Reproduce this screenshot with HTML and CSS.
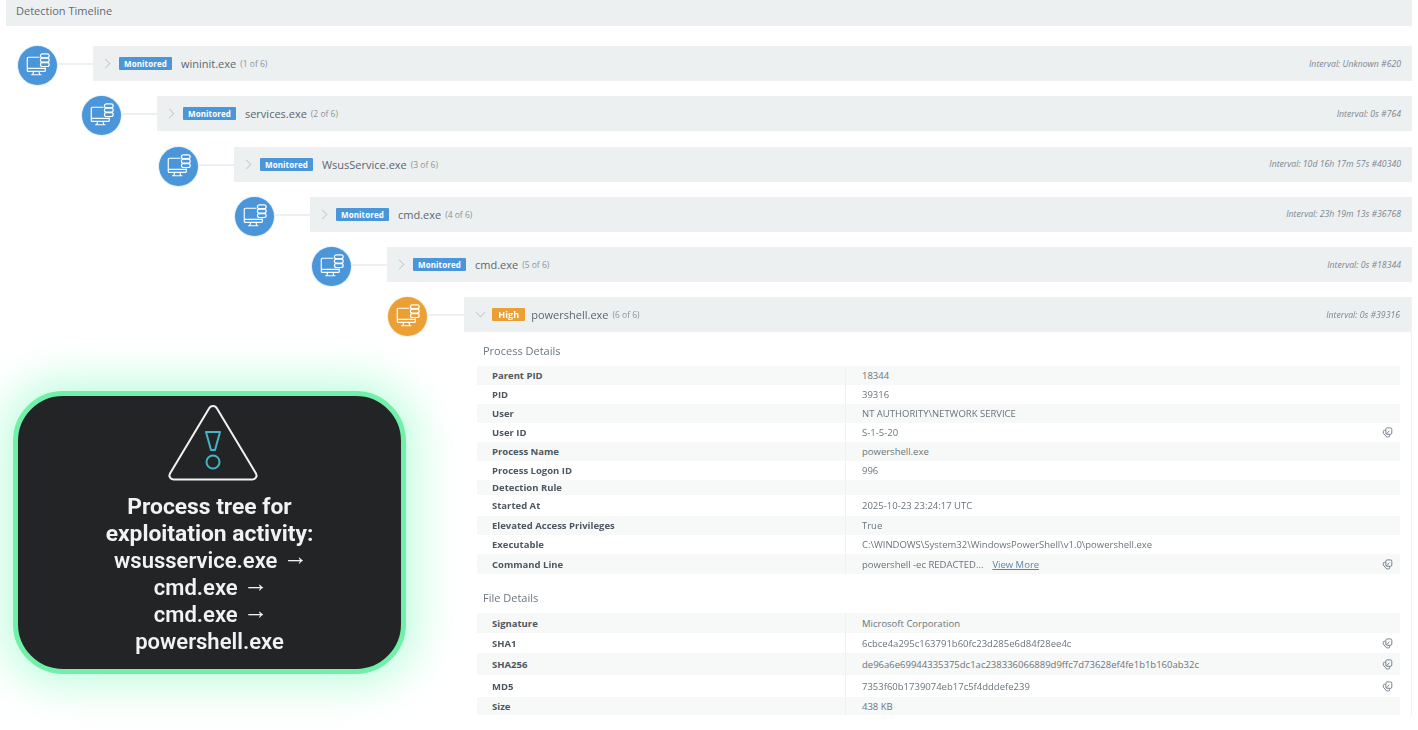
FILE: index.html
```html
<!DOCTYPE html>
<html lang="en">
<head>
    <meta charset="UTF-8">
    <meta name="viewport" content="width=device-width, initial-scale=1.0">
    <title>Detection Timeline</title>
    <link rel="stylesheet" href="styles.css">
</head>
<body>
    <svg class="defs" width="0" height="0">
        <symbol id="host" viewBox="0 0 40 40">
            <g fill="none" stroke="#fff" stroke-width="1.2">
                <path d="M22 11.500H10.500a1 1 0 0 0-1 1V25a1 1 0 0 0 1 1H27a1 1 0 0 0 1-1v-3"/>
                <path d="M9.500 23h18.500"/>
                <path d="M16 26l-.7 3.200M21.500 26l.7 3.200M13.500 29.500h10.500"/>
                <rect x="23" y="8" width="9" height="4" rx="2"/>
                <rect x="23" y="12.500" width="9" height="4" rx="2"/>
                <rect x="23" y="17" width="9" height="4" rx="2"/>
            </g>
        </symbol>
        <symbol id="copy" viewBox="0 0 12 12">
            <g fill="none" stroke="#6d7a86" stroke-width="1">
                <rect x="4.200" y="1" width="6.500" height="7" rx="1.400"/>
                <path d="M4 3.600H2.600a1.200 1.200 0 0 0-1.200 1.200v1.800L5 10.800h2.200a1.200 1.200 0 0 0 1.200-1.200V8"/>
                <path d="M5 7.500L8 4"/>
            </g>
        </symbol>
    </svg>

    <div class="page">
        <div class="title-bar">Detection Timeline</div>

        <div class="timeline">
            <div class="node level-1">
                <svg class="node-icon"><use href="#host"/></svg>
                <div class="link"></div>
                <div class="bar">
                    <span class="chevron"></span>
                    <span class="badge">Monitored</span>
                    <span class="proc">wininit.exe</span>
                    <span class="count">(1 of 6)</span>
                    <span class="interval">Interval: Unknown #620</span>
                </div>
            </div>
            <div class="node level-2">
                <svg class="node-icon"><use href="#host"/></svg>
                <div class="link"></div>
                <div class="bar">
                    <span class="chevron"></span>
                    <span class="badge">Monitored</span>
                    <span class="proc">services.exe</span>
                    <span class="count">(2 of 6)</span>
                    <span class="interval">Interval: 0s #764</span>
                </div>
            </div>
            <div class="node level-3">
                <svg class="node-icon"><use href="#host"/></svg>
                <div class="link"></div>
                <div class="bar">
                    <span class="chevron"></span>
                    <span class="badge">Monitored</span>
                    <span class="proc">WsusService.exe</span>
                    <span class="count">(3 of 6)</span>
                    <span class="interval">Interval: 10d 16h 17m 57s #40340</span>
                </div>
            </div>
            <div class="node level-4">
                <svg class="node-icon"><use href="#host"/></svg>
                <div class="link"></div>
                <div class="bar">
                    <span class="chevron"></span>
                    <span class="badge">Monitored</span>
                    <span class="proc">cmd.exe</span>
                    <span class="count">(4 of 6)</span>
                    <span class="interval">Interval: 23h 19m 13s #36768</span>
                </div>
            </div>
            <div class="node level-5">
                <svg class="node-icon"><use href="#host"/></svg>
                <div class="link"></div>
                <div class="bar">
                    <span class="chevron"></span>
                    <span class="badge">Monitored</span>
                    <span class="proc">cmd.exe</span>
                    <span class="count">(5 of 6)</span>
                    <span class="interval">Interval: 0s #18344</span>
                </div>
            </div>
            <div class="node level-6 high">
                <svg class="node-icon"><use href="#host"/></svg>
                <div class="link"></div>
                <div class="expanded">
                    <div class="bar">
                        <span class="chevron open"></span>
                        <span class="badge">High</span>
                        <span class="proc">powershell.exe</span>
                        <span class="count">(6 of 6)</span>
                        <span class="interval">Interval: 0s #39316</span>
                    </div>
                    <div class="details">
                        <h4>Process Details</h4>
                        <div class="table">
                            <div class="row"><b>Parent PID</b><span>18344</span></div>
                            <div class="row"><b>PID</b><span>39316</span></div>
                            <div class="row"><b>User</b><span>NT AUTHORITY\NETWORK SERVICE</span></div>
                            <div class="row"><b>User ID</b><span>S-1-5-20</span><svg class="copy"><use href="#copy"/></svg></div>
                            <div class="row"><b>Process Name</b><span>powershell.exe</span></div>
                            <div class="row"><b>Process Logon ID</b><span>996</span></div>
                            <div class="row short"><b>Detection Rule</b><span></span></div>
                            <div class="row tall"><b>Started At</b><span>2025-10-23 23:24:17 UTC</span></div>
                            <div class="row"><b>Elevated Access Privileges</b><span>True</span></div>
                            <div class="row"><b>Executable</b><span>C:\WINDOWS\System32\WindowsPowerShell\v1.0\powershell.exe</span></div>
                            <div class="row mid"><b>Command Line</b><span>powershell -ec REDACTED...<a class="more">View More</a></span><svg class="copy"><use href="#copy"/></svg></div>
                        </div>
                        <h4 class="file-head">File Details</h4>
                        <div class="table">
                            <div class="row mid"><b>Signature</b><span>Microsoft Corporation</span></div>
                            <div class="row mid"><b>SHA1</b><span>6cbce4a295c163791b60fc23d285e6d84f28ee4c</span><svg class="copy"><use href="#copy"/></svg></div>
                            <div class="row big"><b>SHA256</b><span>de96a6e69944335375dc1ac238336066889d9ffc7d73628ef4fe1b1b160ab32c</span><svg class="copy"><use href="#copy"/></svg></div>
                            <div class="row big"><b>MD5</b><span>7353f60b1739074eb17c5f4dddefe239</span><svg class="copy"><use href="#copy"/></svg></div>
                            <div class="row last"><b>Size</b><span>438 KB</span></div>
                        </div>
                    </div>
                </div>
            </div>
        </div>
    </div>

    <div class="callout">
        <svg class="warn" width="94" height="78" viewBox="0 0 94 78">
            <path d="M43 4.500a4.500 4.500 0 0 1 8 0l39 65a4 4 0 0 1-3.500 6H7.500a4 4 0 0 1-3.500-6z" fill="none" stroke="#f1f1f1" stroke-width="2"/>
            <path d="M40 28h14l-5 18h-4z" fill="none" stroke="#45b4c6" stroke-width="2" stroke-linejoin="round"/>
            <circle cx="47" cy="58" r="6.500" fill="none" stroke="#45b4c6" stroke-width="2"/>
        </svg>
        <p><span class="lead">Process tree for<br>exploitation activity:</span><br>wsusservice.exe <span class="arrow">→</span><br>cmd.exe <span class="arrow">→</span><br>cmd.exe <span class="arrow">→</span><br>powershell.exe</p>
    </div>
</body>
</html>
```

FILE: styles.css
```css
body {
    margin: 0;
    height: 730px;
    overflow: hidden;
    position: relative;
    background-color: white;
    font-family: "Open Sans", Arial, sans-serif;
    color: #5f6b75;
}

.defs {
    position: absolute;
}

.page {
    padding: 0 6px;
    filter: blur(0.7px);
}

.title-bar {
    height: 26px;
    padding: 4px 10px 0;
    box-sizing: border-box;
    background-color: #edf0f1;
    font-size: 11px;
    line-height: 14px;
    color: #5e6a74;
}

.timeline {
    margin-top: 20px;
    display: flex;
    flex-direction: column;
    gap: 15.3px;
}

.node {
    display: flex;
    align-items: flex-start;
}

.level-1 { margin-left: 12px; }
.level-2 { margin-left: 76px; }
.level-3 { margin-left: 153px; }
.level-4 { margin-left: 229px; }
.level-5 { margin-left: 306px; }
.level-6 { margin-left: 382px; }

.node-icon {
    flex: none;
    width: 39px;
    height: 39px;
    margin-bottom: -4px;
    border-radius: 50%;
    background-color: #4a96d9;
    box-shadow: 0 0 0 1px #e6f0f8;
}

.high .node-icon {
    background-color: #eaa035;
    box-shadow: 0 0 0 1px #faf0e0;
}

.link {
    flex: none;
    width: 36px;
    height: 2px;
    margin-top: 17px;
    background-color: #edf0f1;
}

.level-6 .link {
    width: 37px;
}

.bar {
    flex: 1;
    height: 35px;
    display: flex;
    align-items: center;
    padding: 0 11px 0 9px;
    background-color: #edf0f1;
    font-size: 11px;
}

.chevron {
    width: 6px;
    height: 6px;
    margin-right: 9.5px;
    border-top: 1.8px solid #c6ccd0;
    border-right: 1.8px solid #c6ccd0;
    transform: rotate(45deg);
}

.chevron.open {
    margin: -4px 8.2px 0 4px;
    transform: rotate(135deg);
}

.badge {
    height: 13px;
    padding: 0 5.5px;
    border-radius: 1px;
    background-color: #4a96d9;
    color: white;
    font-size: 8px;
    font-weight: 700;
    line-height: 13px;
    letter-spacing: 0.1px;
}

.proc {
    margin-left: 8.5px;
    color: #5a6670;
}

.high .badge {
    padding: 0 6px;
    background-color: #eaa035;
    font-size: 9px;
}

.high .proc {
    margin-left: 6px;
}

.count {
    margin-left: 4px;
    font-size: 8.5px;
    color: #89939b;
}

.interval {
    margin-left: auto;
    font-size: 8.7px;
    font-style: italic;
    color: #7c8790;
}

.expanded {
    flex: 1;
    display: flex;
    flex-direction: column;
    min-width: 0;
    border-right: 1px solid #f0f2f3;
}

.expanded .bar {
    flex: none;
}

.details {
    padding: 0 11px 0 13px;
}

.details h4 {
    margin: 0;
    padding: 11px 0 0 6px;
    height: 34px;
    box-sizing: border-box;
    font-size: 11px;
    font-weight: 400;
    line-height: 15px;
    color: #6c7780;
}

.details .file-head {
    height: 39px;
    padding-top: 16px;
}

.row {
    display: grid;
    grid-template-columns: 368px 1fr;
    align-items: center;
    height: 19px;
    position: relative;
    font-size: 9.5px;
}

.row:nth-child(odd) {
    background-color: #f7f8f8;
}

.row.short { height: 15px; }
.row.mid { height: 20px; }
.row.tall { height: 21px; }
.row.big { height: 22px; }
.row.last { height: 18px; }

.row b {
    padding-left: 15px;
    font-weight: 700;
    color: #4d5761;
}

.row span {
    height: 100%;
    display: flex;
    align-items: center;
    padding-left: 16px;
    border-left: 1px solid #eef0f1;
    color: #6a747d;
}

.more {
    margin-left: 9px;
    color: #5d84a6;
    text-decoration: underline;
}

.copy {
    position: absolute;
    right: 7px;
    top: 50%;
    margin-top: -5.5px;
    width: 11px;
    height: 11px;
}

.callout {
    position: absolute;
    left: 13px;
    top: 391px;
    width: 393px;
    height: 283px;
    box-sizing: border-box;
    padding-top: 12px;
    border: 5px solid #70f0a8;
    border-radius: 50px;
    background-color: #232426;
    box-shadow: 0 0 40px 12px rgba(110, 250, 180, 0.42);
    text-align: center;
    color: #f2f2f2;
    font-family: Roboto, Arial, sans-serif;
}

.warn {
    display: block;
    margin: -4px auto 0 148px;
}

.callout p {
    margin: 11px 0 0;
    font-size: 22px;
    font-weight: 600;
    line-height: 27.1px;
}

.lead {
    font-size: 22.8px;
    font-weight: 700;
}

.arrow {
    margin-right: -3px;
    font-family: "Liberation Sans", sans-serif;
    font-size: 25px;
    font-weight: 400;
    line-height: 0;
    vertical-align: 3px;
}
```
